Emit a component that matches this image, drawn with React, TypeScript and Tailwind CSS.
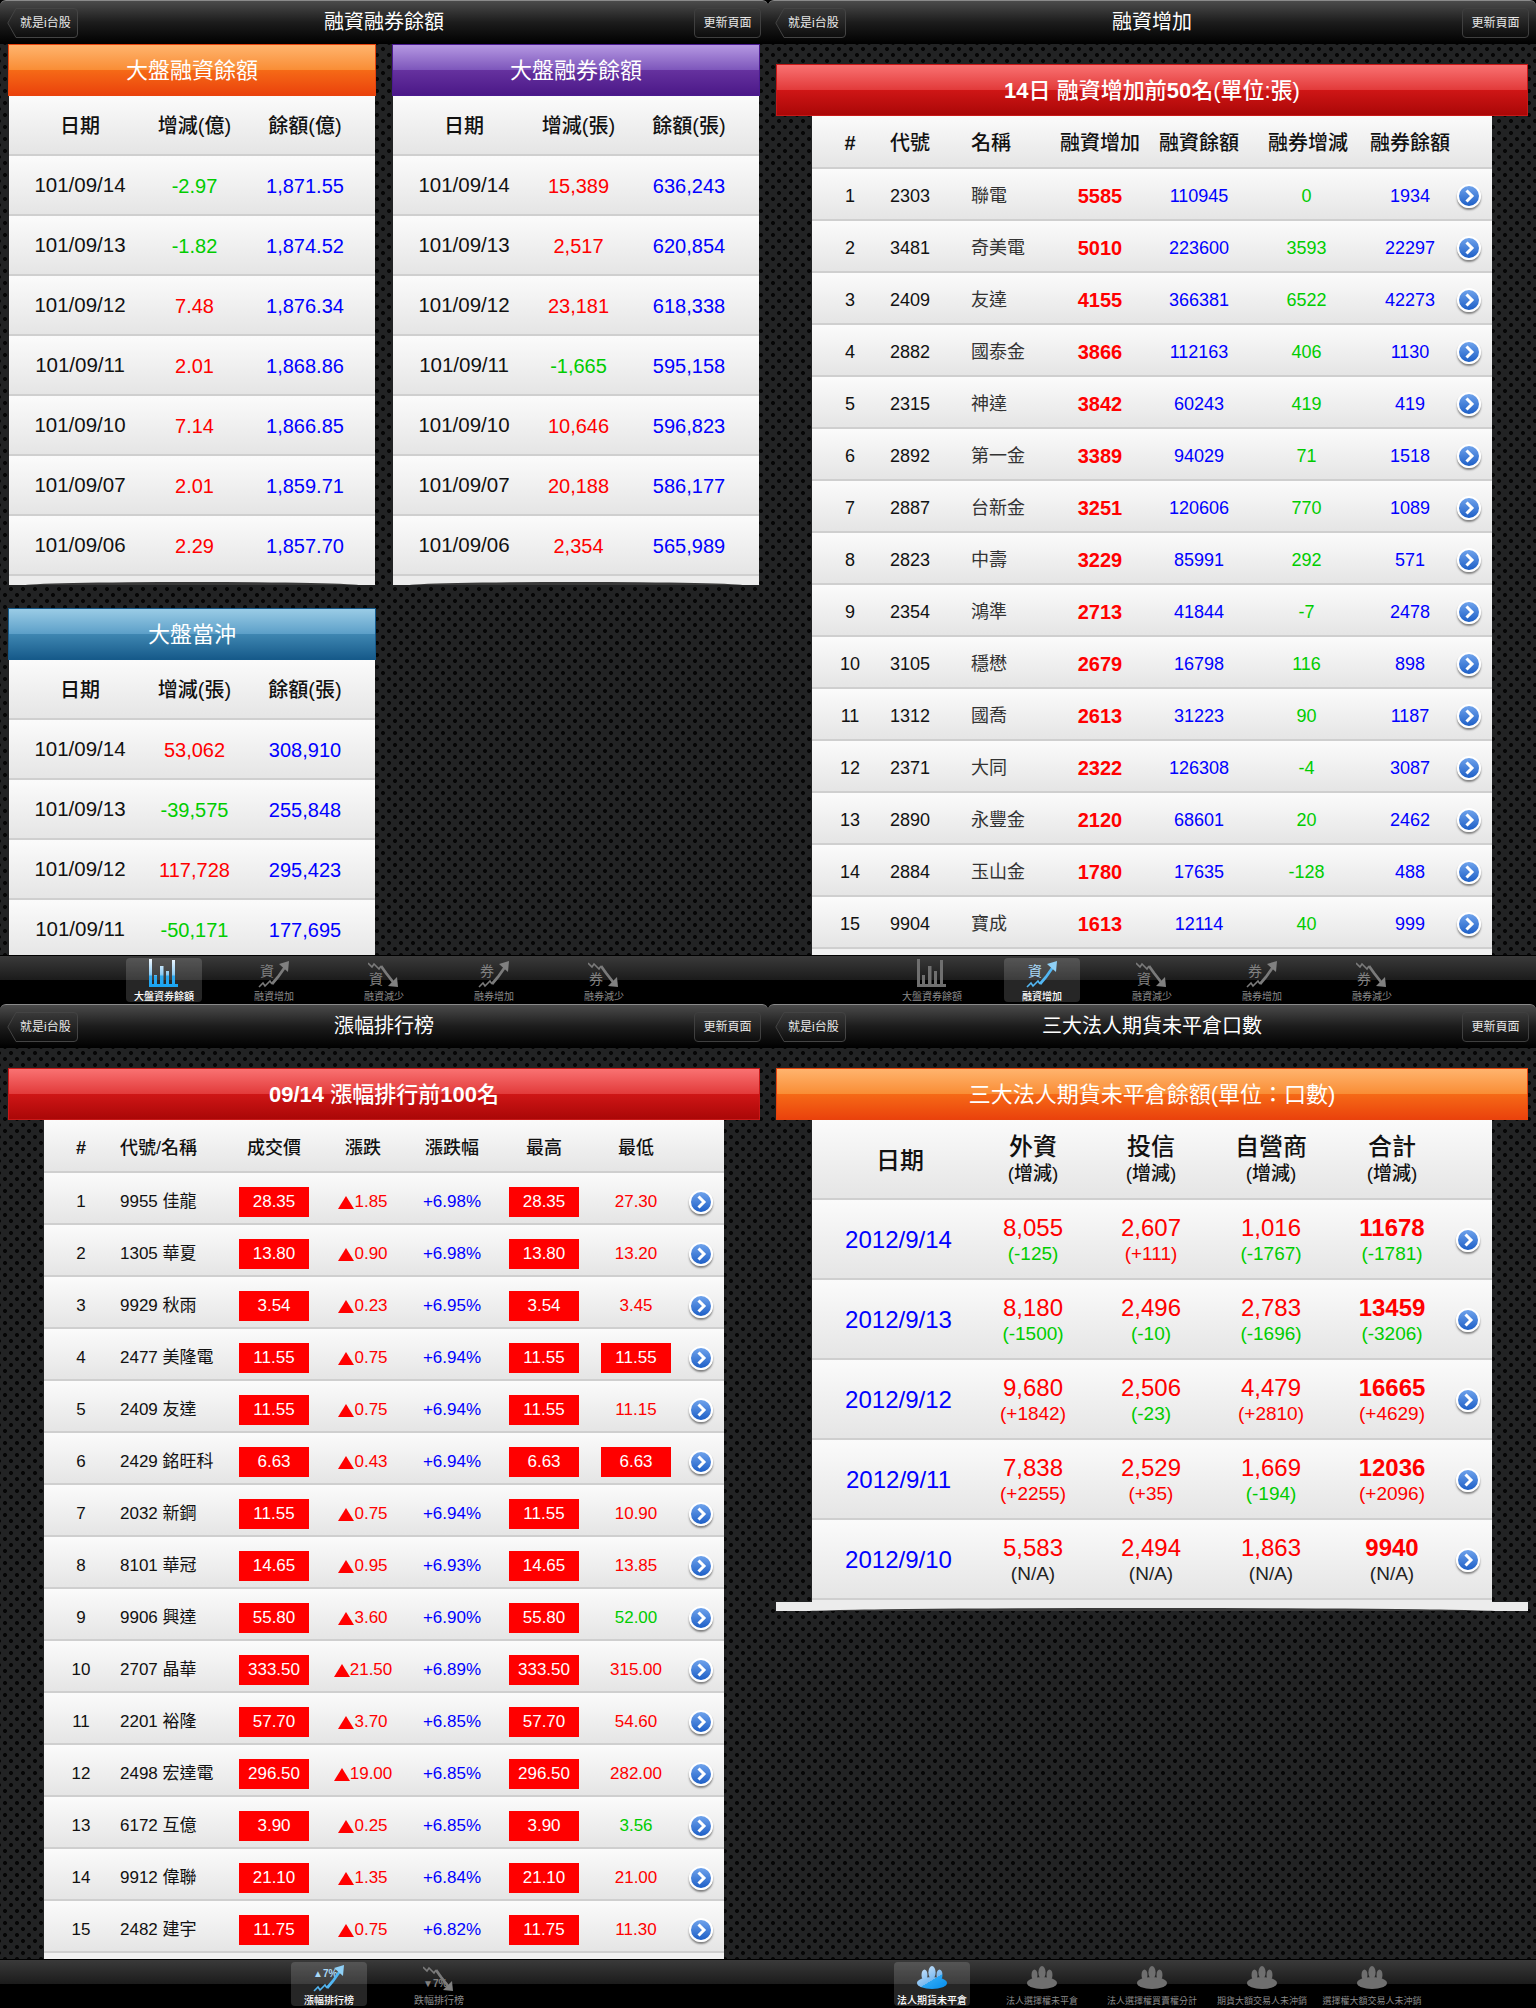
import type { ReactNode } from "react";

const dots =
  "bg-[#222324] bg-[radial-gradient(circle,#060606_1.7px,transparent_2.3px),radial-gradient(circle,#060606_1.7px,transparent_2.3px)] bg-size-[12px_12px] bg-position-[5px_-1px,11px_5px]";
const rowBg = "bg-linear-to-b from-[#fbfbfb] to-[#e5e5e5] border-b-2 border-[#cfcfcf]";

const orange = "border-[#e8430d] bg-[linear-gradient(#ffb46e,#f98d35_50%,#f66a17_50%,#ea420c)]";
const purple = "border-[#4a1a90] bg-[linear-gradient(#b598e2,#7d56bb_50%,#66329f_50%,#4b1888)]";
const blue = "border-[#165a8a] bg-[linear-gradient(#9acce6,#5c9fc8_50%,#3f87b2_50%,#165a8a)]";
const red = "border-[#c81818] bg-[linear-gradient(#f97272,#e23a3a_50%,#cf1616_50%,#aa0707)]";

const signColor = (v: string) => (v.startsWith("-") ? "text-[#00cc00]" : "text-[#ff0000]");

function GlossHeader({ tone, children }: { tone: string; children: ReactNode }) {
  return (
    <div className={`h-[52px] border flex items-center justify-center text-white text-[22px] ${tone}`}>
      {children}
    </div>
  );
}

function Chevron() {
  return (
    <span className="w-6 h-6 rounded-full border-2 border-white bg-linear-to-b from-[#6fa3ec] to-[#1b5ec6] shadow-[0_2px_2px_rgba(0,0,0,0.45)] flex items-center justify-center">
      <svg width="12" height="14" viewBox="0 0 12 14" fill="none">
        <path d="M3.5 1.5 9 7l-5.5 5.5" stroke="#fff" strokeWidth="3" />
      </svg>
    </span>
  );
}

function Footer() {
  return (
    <div className="relative h-[9px] bg-[#ececec] overflow-hidden">
      <div className="absolute left-[4%] right-[4%] bottom-[-4px] h-[7px] rounded-[50%] bg-[#3a3a3a]" />
    </div>
  );
}

function BarsIcon({ active }: { active: boolean }) {
  const fill = active ? "url(#barsActive)" : "#6f6f6f";
  return (
    <svg width="30" height="30" viewBox="0 0 30 30">
      <defs>
        <linearGradient id="barsActive" x1="0" y1="0" x2="0" y2="28" gradientUnits="userSpaceOnUse">
          <stop offset="0" stopColor="#f2f9ff" />
          <stop offset="0.55" stopColor="#8ccbf4" />
          <stop offset="0.62" stopColor="#2ea9ef" />
          <stop offset="1" stopColor="#18a4f2" />
        </linearGradient>
      </defs>
      <rect x="0" y="0" width="3" height="28" fill={fill} />
      <rect x="5" y="16" width="3" height="12" fill={fill} />
      <rect x="11" y="7" width="3.5" height="21" fill={fill} />
      <rect x="17" y="12" width="3" height="16" fill={fill} />
      <rect x="23" y="1" width="3" height="27" fill={fill} />
      <rect x="0" y="25" width="29" height="3" fill={fill} />
    </svg>
  );
}

function RiseIcon({ label, active, small }: { label: string; active: boolean; small?: boolean }) {
  const line = active ? "#52b6f2" : "#7a7a7a";
  return (
    <svg width="32" height="30" viewBox="0 0 32 30">
      <text x={small ? 0 : 2} y={small ? 14 : 17} fontSize={small ? 10 : 14} fontWeight={small ? 700 : 400} fill={active ? "#a9d8f7" : "#808080"}>
        {label}
      </text>
      <path d="M1 28l4-4 2 3 5-5 2 3" fill="none" stroke={line} strokeWidth="1.6" />
      <path d="M14 25l6-7 7-10" fill="none" stroke={line} strokeWidth="2.8" />
      <path d="M31 2l-10 3 9 8z" fill={active ? "#8fd0f6" : "#808080"} />
    </svg>
  );
}

function FallIcon({ label, small }: { label: string; small?: boolean }) {
  return (
    <svg width="32" height="30" viewBox="0 0 32 30">
      <text x={small ? 0 : 1} y={small ? 24 : 25} fontSize={small ? 10 : 14} fontWeight={small ? 700 : 400} fill="#808080">
        {label}
      </text>
      <path d="M0 4l4 4 2-3 5 5 2-3" fill="none" stroke="#7a7a7a" strokeWidth="1.6" />
      <path d="M13 7l5 7 7 9" fill="none" stroke="#7a7a7a" strokeWidth="2.8" />
      <path d="M30 28l-10-1 9-9z" fill="#808080" />
    </svg>
  );
}

function PawIcon({ active }: { active: boolean }) {
  const fill = active ? "url(#pawActive)" : "#6f6f6f";
  return (
    <svg width="30" height="30" viewBox="0 0 30 30">
      <defs>
        <linearGradient id="pawActive" x1="22" y1="26" x2="10" y2="6" gradientUnits="userSpaceOnUse">
          <stop offset="0" stopColor="#0e93ee" />
          <stop offset="0.47" stopColor="#2aa6f4" />
          <stop offset="0.48" stopColor="#79b9f0" />
          <stop offset="1" stopColor="#b5d8f8" />
        </linearGradient>
      </defs>
      <ellipse cx="15" cy="9.5" rx="3.6" ry="6.5" fill={fill} />
      <ellipse cx="7.5" cy="12" rx="3" ry="5.5" fill={fill} />
      <ellipse cx="22.5" cy="12" rx="3" ry="5.5" fill={fill} />
      <ellipse cx="15" cy="20" rx="15" ry="6" fill={fill} />
    </svg>
  );
}

type Tab = { label: string; icon: ReactNode; active?: boolean; size?: string };

function TabBar({ tabs }: { tabs: Tab[] }) {
  return (
    <div className="h-[49px] border-t border-black bg-[linear-gradient(#3a3a3a,#1b1b1b_50%,#000_50%)] flex justify-center">
      {tabs.map((t) => (
        <div key={t.label} className="w-[110px] flex justify-center">
          <div className={`w-[76px] h-[44px] mt-[2px] rounded-[4px] flex flex-col items-center ${t.active ? "bg-white/15" : ""}`}>
            <div className="h-[30px] mt-[1px]">{t.icon}</div>
            <div className={`mt-[2px] leading-[12px] whitespace-nowrap ${t.size ?? "text-[10px]"} ${t.active ? "text-white font-medium" : "text-[#8a8a8a]"}`}>
              {t.label}
            </div>
          </div>
        </div>
      ))}
    </div>
  );
}

function NavBar({ title }: { title: string }) {
  return (
    <div className="h-[44px] rounded-t-[6px] border-t border-[#8a8a8a] bg-[linear-gradient(#4b4b4b,#1c1c1c_50%,#000)] grid grid-cols-[1fr_auto_1fr] items-center text-white">
      <div className="relative ml-[7px] w-[71px] h-[30px] justify-self-start flex items-center pl-[13px] text-[12px] text-[#e8e8e8]">
        <svg className="absolute left-0 top-0" width="71" height="30" viewBox="0 0 71 30">
          <defs>
            <linearGradient id="backBtn" x1="0" y1="0" x2="0" y2="1">
              <stop offset="0" stopColor="#3a3a3a" />
              <stop offset="1" stopColor="#0d0d0d" />
            </linearGradient>
          </defs>
          <path d="M9 .5H67a3.5 3.5 0 0 1 3.5 3.5V26a3.5 3.5 0 0 1-3.5 3.5H9L.8 15z" fill="url(#backBtn)" stroke="#444" />
        </svg>
        <span className="relative whitespace-nowrap">就是i台股</span>
      </div>
      <div className="text-[20px] pb-[2px]">{title}</div>
      <div className="mr-[7px] w-[67px] h-[30px] justify-self-end flex items-center justify-center rounded-[4px] border border-[#3f3f3f] bg-linear-to-b from-[#3a3a3a] to-[#0d0d0d] text-[12px] text-[#e8e8e8]">
        更新頁面
      </div>
    </div>
  );
}

function Screen({ title, tabs, children }: { title: string; tabs: Tab[]; children: ReactNode }) {
  return (
    <div className="h-[1004px] flex flex-col bg-black overflow-hidden">
      <NavBar title={title} />
      <div className={`h-[911px] overflow-hidden ${dots}`}>{children}</div>
      <TabBar tabs={tabs} />
    </div>
  );
}

const cols3 = "grid grid-cols-[142px_87px_134px] items-center text-center pt-[1px]";

function SummaryPanel({
  title,
  tone,
  heads,
  rows,
  footer,
}: {
  title: string;
  tone: string;
  heads: string[];
  rows: string[][];
  footer?: boolean;
}) {
  return (
    <div className="w-[368px]">
      <GlossHeader tone={tone}>{title}</GlossHeader>
      <div className="mx-px">
        <div className={`${cols3} ${rowBg} h-[60px] text-[20px] font-medium text-[#111]`}>
          {heads.map((h) => (
            <div key={h}>{h}</div>
          ))}
        </div>
        {rows.map((r) => (
          <div key={r[0]} className={`${cols3} ${rowBg} h-[60px] text-[20px]`}>
            <div className="text-[20.5px] text-[#111]">{r[0]}</div>
            <div className={signColor(r[1])}>{r[1]}</div>
            <div className="text-[#0000ff]">{r[2]}</div>
          </div>
        ))}
        {footer && <Footer />}
      </div>
    </div>
  );
}

const marginTabs: Tab[] = [
  { label: "大盤資券餘額", icon: <BarsIcon active={false} /> },
  { label: "融資增加", icon: <RiseIcon label="資" active={false} /> },
  { label: "融資減少", icon: <FallIcon label="資" /> },
  { label: "融券增加", icon: <RiseIcon label="券" active={false} /> },
  { label: "融券減少", icon: <FallIcon label="券" /> },
];

const summaryTabs = marginTabs.map((t, i) => (i === 0 ? { ...t, active: true, icon: <BarsIcon active /> } : t));
const increaseTabs = marginTabs.map((t, i) => (i === 1 ? { ...t, active: true, icon: <RiseIcon label="資" active /> } : t));

const rankTabs: Tab[] = [
  { label: "漲幅排行榜", active: true, icon: <RiseIcon label="▲7%" active small /> },
  { label: "跌幅排行榜", icon: <FallIcon label="▼7%" small /> },
];

const futuresTabs: Tab[] = [
  { label: "法人期貨未平倉", active: true, icon: <PawIcon active /> },
  { label: "法人選擇權未平倉", size: "text-[9px]", icon: <PawIcon active={false} /> },
  { label: "法人選擇權買賣權分計", size: "text-[9px]", icon: <PawIcon active={false} /> },
  { label: "期貨大額交易人未沖銷", size: "text-[9px]", icon: <PawIcon active={false} /> },
  { label: "選擇權大額交易人未沖銷", size: "text-[9px]", icon: <PawIcon active={false} /> },
];

const marginRows = [
  ["101/09/14", "-2.97", "1,871.55"],
  ["101/09/13", "-1.82", "1,874.52"],
  ["101/09/12", "7.48", "1,876.34"],
  ["101/09/11", "2.01", "1,868.86"],
  ["101/09/10", "7.14", "1,866.85"],
  ["101/09/07", "2.01", "1,859.71"],
  ["101/09/06", "2.29", "1,857.70"],
];

const shortRows = [
  ["101/09/14", "15,389", "636,243"],
  ["101/09/13", "2,517", "620,854"],
  ["101/09/12", "23,181", "618,338"],
  ["101/09/11", "-1,665", "595,158"],
  ["101/09/10", "10,646", "596,823"],
  ["101/09/07", "20,188", "586,177"],
  ["101/09/06", "2,354", "565,989"],
];

const dayTradeRows = [
  ["101/09/14", "53,062", "308,910"],
  ["101/09/13", "-39,575", "255,848"],
  ["101/09/12", "117,728", "295,423"],
  ["101/09/11", "-50,171", "177,695"],
];

const increaseRows = [
  ["2303", "聯電", "5585", "110945", "0", "1934"],
  ["3481", "奇美電", "5010", "223600", "3593", "22297"],
  ["2409", "友達", "4155", "366381", "6522", "42273"],
  ["2882", "國泰金", "3866", "112163", "406", "1130"],
  ["2315", "神達", "3842", "60243", "419", "419"],
  ["2892", "第一金", "3389", "94029", "71", "1518"],
  ["2887", "台新金", "3251", "120606", "770", "1089"],
  ["2823", "中壽", "3229", "85991", "292", "571"],
  ["2354", "鴻準", "2713", "41844", "-7", "2478"],
  ["3105", "穩懋", "2679", "16798", "116", "898"],
  ["1312", "國喬", "2613", "31223", "90", "1187"],
  ["2371", "大同", "2322", "126308", "-4", "3087"],
  ["2890", "永豐金", "2120", "68601", "20", "2462"],
  ["2884", "玉山金", "1780", "17635", "-128", "488"],
  ["9904", "寶成", "1613", "12114", "40", "999"],
];

const cols8 = "grid grid-cols-[76px_44px_118px_100px_98px_120px_84px_40px] items-center";

function IncreaseTable() {
  return (
    <div className="pt-[20px] px-2 h-full">
      <GlossHeader tone={red}>
        <span className="font-medium">
          <b>14</b>日 融資增加前<b>50</b>名(單位:張)
        </span>
      </GlossHeader>
      <div className="mx-[36px] h-full bg-[#f1f1f1]">
        <div className={`${cols8} ${rowBg} h-[53px] pt-[2px] text-[20px] font-medium text-[#111] text-center`}>
          <div className="font-bold">#</div>
          <div className="whitespace-nowrap">代號</div>
          <div className="text-left pl-[39px]">名稱</div>
          <div>融資增加</div>
          <div>融資餘額</div>
          <div>融券增減</div>
          <div>融券餘額</div>
          <div />
        </div>
        {increaseRows.map((r, i) => (
          <div key={r[0]} className={`${cols8} ${rowBg} h-[52px] pt-[4px] text-[18px] text-center`}>
            <div className="text-[#111]">{i + 1}</div>
            <div className="text-[#111]">{r[0]}</div>
            <div className="text-left pl-[39px] text-[#333]">{r[1]}</div>
            <div className="font-bold text-[20px] text-[#ff0000]">{r[2]}</div>
            <div className="text-[#0000ff]">{r[3]}</div>
            <div className="text-[#00cc00] pr-[3px]">{r[4]}</div>
            <div className="text-[#0000ff]">{r[5]}</div>
            <div className="pl-[5px] flex">
              <Chevron />
            </div>
          </div>
        ))}
      </div>
    </div>
  );
}

const rankRows = [
  ["9955 佳龍", "28.35", "1.85", "+6.98%", "28.35", "27.30"],
  ["1305 華夏", "13.80", "0.90", "+6.98%", "13.80", "13.20"],
  ["9929 秋雨", "3.54", "0.23", "+6.95%", "3.54", "3.45"],
  ["2477 美隆電", "11.55", "0.75", "+6.94%", "11.55", "11.55"],
  ["2409 友達", "11.55", "0.75", "+6.94%", "11.55", "11.15"],
  ["2429 銘旺科", "6.63", "0.43", "+6.94%", "6.63", "6.63"],
  ["2032 新鋼", "11.55", "0.75", "+6.94%", "11.55", "10.90"],
  ["8101 華冠", "14.65", "0.95", "+6.93%", "14.65", "13.85"],
  ["9906 興達", "55.80", "3.60", "+6.90%", "55.80", "52.00"],
  ["2707 晶華", "333.50", "21.50", "+6.89%", "333.50", "315.00"],
  ["2201 裕隆", "57.70", "3.70", "+6.85%", "57.70", "54.60"],
  ["2498 宏達電", "296.50", "19.00", "+6.85%", "296.50", "282.00"],
  ["6172 互億", "3.90", "0.25", "+6.85%", "3.90", "3.56"],
  ["9912 偉聯", "21.10", "1.35", "+6.84%", "21.10", "21.00"],
  ["2482 建宇", "11.75", "0.75", "+6.82%", "11.75", "11.30"],
];

const greenLows = ["52.00", "3.56"];
const cols7 = "grid grid-cols-[74px_121px_70px_108px_70px_114px_70px_53px] items-center text-center";

function PriceBox({ value }: { value: string }) {
  return <div className="w-[70px] h-[30px] mx-auto flex items-center justify-center bg-[#ff0000] text-white">{value}</div>;
}

function RankTable() {
  return (
    <div className="pt-[20px] px-2 h-full">
      <GlossHeader tone={red}>
        <span className="font-medium">
          <b>09/14</b> 漲幅排行前<b>100</b>名
        </span>
      </GlossHeader>
      <div className="mx-[36px] h-full bg-[#f1f1f1]">
        <div className={`${cols7} ${rowBg} h-[53px] pt-[5px] text-[18px] font-medium text-[#111]`}>
          <div className="font-bold">#</div>
          <div className="text-left pl-[2px] whitespace-nowrap">代號/名稱</div>
          <div>成交價</div>
          <div>漲跌</div>
          <div>漲跌幅</div>
          <div>最高</div>
          <div>最低</div>
          <div />
        </div>
        {rankRows.map((r, i) => {
          const limit = r[5] === r[1];
          return (
            <div key={r[0]} className={`${cols7} ${rowBg} h-[52px] pt-[8px] text-[17px]`}>
              <div className="text-[#111]">{i + 1}</div>
              <div className="text-left pl-[2px] text-[#111] whitespace-nowrap">{r[0]}</div>
              <PriceBox value={r[1]} />
              <div className="text-[#ff0000] whitespace-nowrap flex items-center justify-center">
                <span className="w-0 h-0 border-x-[8px] border-x-transparent border-b-[13px] border-b-[#ff0000]" />
                <span>{r[2]}</span>
              </div>
              <div className="text-[#0000ff]">{r[3]}</div>
              <PriceBox value={r[4]} />
              {limit ? (
                <PriceBox value={r[5]} />
              ) : (
                <div className={greenLows.includes(r[5]) ? "text-[#00cc00]" : "text-[#ff0000]"}>{r[5]}</div>
              )}
              <div className="pl-[18px] flex">
                <Chevron />
              </div>
            </div>
          );
        })}
      </div>
    </div>
  );
}

const futuresRows = [
  ["2012/9/14", "8,055", "(-125)", "2,607", "(+111)", "1,016", "(-1767)", "11678", "(-1781)"],
  ["2012/9/13", "8,180", "(-1500)", "2,496", "(-10)", "2,783", "(-1696)", "13459", "(-3206)"],
  ["2012/9/12", "9,680", "(+1842)", "2,506", "(-23)", "4,479", "(+2810)", "16665", "(+4629)"],
  ["2012/9/11", "7,838", "(+2255)", "2,529", "(+35)", "1,669", "(-194)", "12036", "(+2096)"],
  ["2012/9/10", "5,583", "(N/A)", "2,494", "(N/A)", "1,863", "(N/A)", "9940", "(N/A)"],
];

const subColor = (v: string) =>
  v.includes("N/A") ? "text-[#222]" : v.includes("-") ? "text-[#00cc00]" : "text-[#ff0000]";

function FuturesHead({ name, className }: { name: string; className: string }) {
  return (
    <div className={`w-[90px] text-center whitespace-nowrap ${className}`}>
      <div className="text-[24px] leading-[30px]">{name}</div>
      <div className="text-[19px] leading-[24px]">(增減)</div>
    </div>
  );
}

function FuturesCell({ main, sub, className, bold }: { main: string; sub: string; className: string; bold?: boolean }) {
  return (
    <div className={`w-[90px] text-center ${className}`}>
      <div className={`text-[24px] leading-[28px] text-[#ff0000] ${bold ? "font-bold" : ""}`}>{main}</div>
      <div className={`text-[19px] leading-[24px] ${subColor(sub)}`}>{sub}</div>
    </div>
  );
}

function FuturesTable() {
  return (
    <div className="pt-[20px] px-2">
      <GlossHeader tone={orange}>三大法人期貨未平倉餘額(單位：口數)</GlossHeader>
      <div className="mx-[36px]">
        <div className={`${rowBg} h-[80px] flex items-center font-medium text-[#111]`}>
          <div className="w-[176px] text-center text-[24px] pt-[3px]">日期</div>
          <FuturesHead name="外資" className="" />
          <FuturesHead name="投信" className="ml-[28px]" />
          <FuturesHead name="自營商" className="ml-[30px]" />
          <FuturesHead name="合計" className="ml-[31px]" />
        </div>
        {futuresRows.map((r) => (
          <div key={r[0]} className={`${rowBg} h-[80px] pt-[2px] flex items-center`}>
            <div className="w-[176px] text-center pr-[3px] text-[24px] text-[#0000ff]">{r[0]}</div>
            <FuturesCell main={r[1]} sub={r[2]} className="" />
            <FuturesCell main={r[3]} sub={r[4]} className="ml-[28px]" />
            <FuturesCell main={r[5]} sub={r[6]} className="ml-[30px]" />
            <FuturesCell main={r[7]} sub={r[8]} className="ml-[31px]" bold />
            <div className="ml-[19px]">
              <Chevron />
            </div>
          </div>
        ))}
        <div className="h-[2px] bg-[#ececec]" />
      </div>
      <Footer />
    </div>
  );
}

export default function App() {
  return (
    <div className="w-[1536px] grid grid-cols-2 font-['Liberation_Sans','Noto_Sans_CJK_TC',sans-serif]">
      <Screen title="融資融券餘額" tabs={summaryTabs}>
        <div className="pl-2 flex gap-4">
          <SummaryPanel title="大盤融資餘額" tone={orange} heads={["日期", "增減(億)", "餘額(億)"]} rows={marginRows} footer />
          <SummaryPanel title="大盤融券餘額" tone={purple} heads={["日期", "增減(張)", "餘額(張)"]} rows={shortRows} footer />
        </div>
        <div className="pl-2 mt-[23px]">
          <SummaryPanel title="大盤當沖" tone={blue} heads={["日期", "增減(張)", "餘額(張)"]} rows={dayTradeRows} />
        </div>
      </Screen>
      <Screen title="融資增加" tabs={increaseTabs}>
        <IncreaseTable />
      </Screen>
      <Screen title="漲幅排行榜" tabs={rankTabs}>
        <RankTable />
      </Screen>
      <Screen title="三大法人期貨未平倉口數" tabs={futuresTabs}>
        <FuturesTable />
      </Screen>
    </div>
  );
}
